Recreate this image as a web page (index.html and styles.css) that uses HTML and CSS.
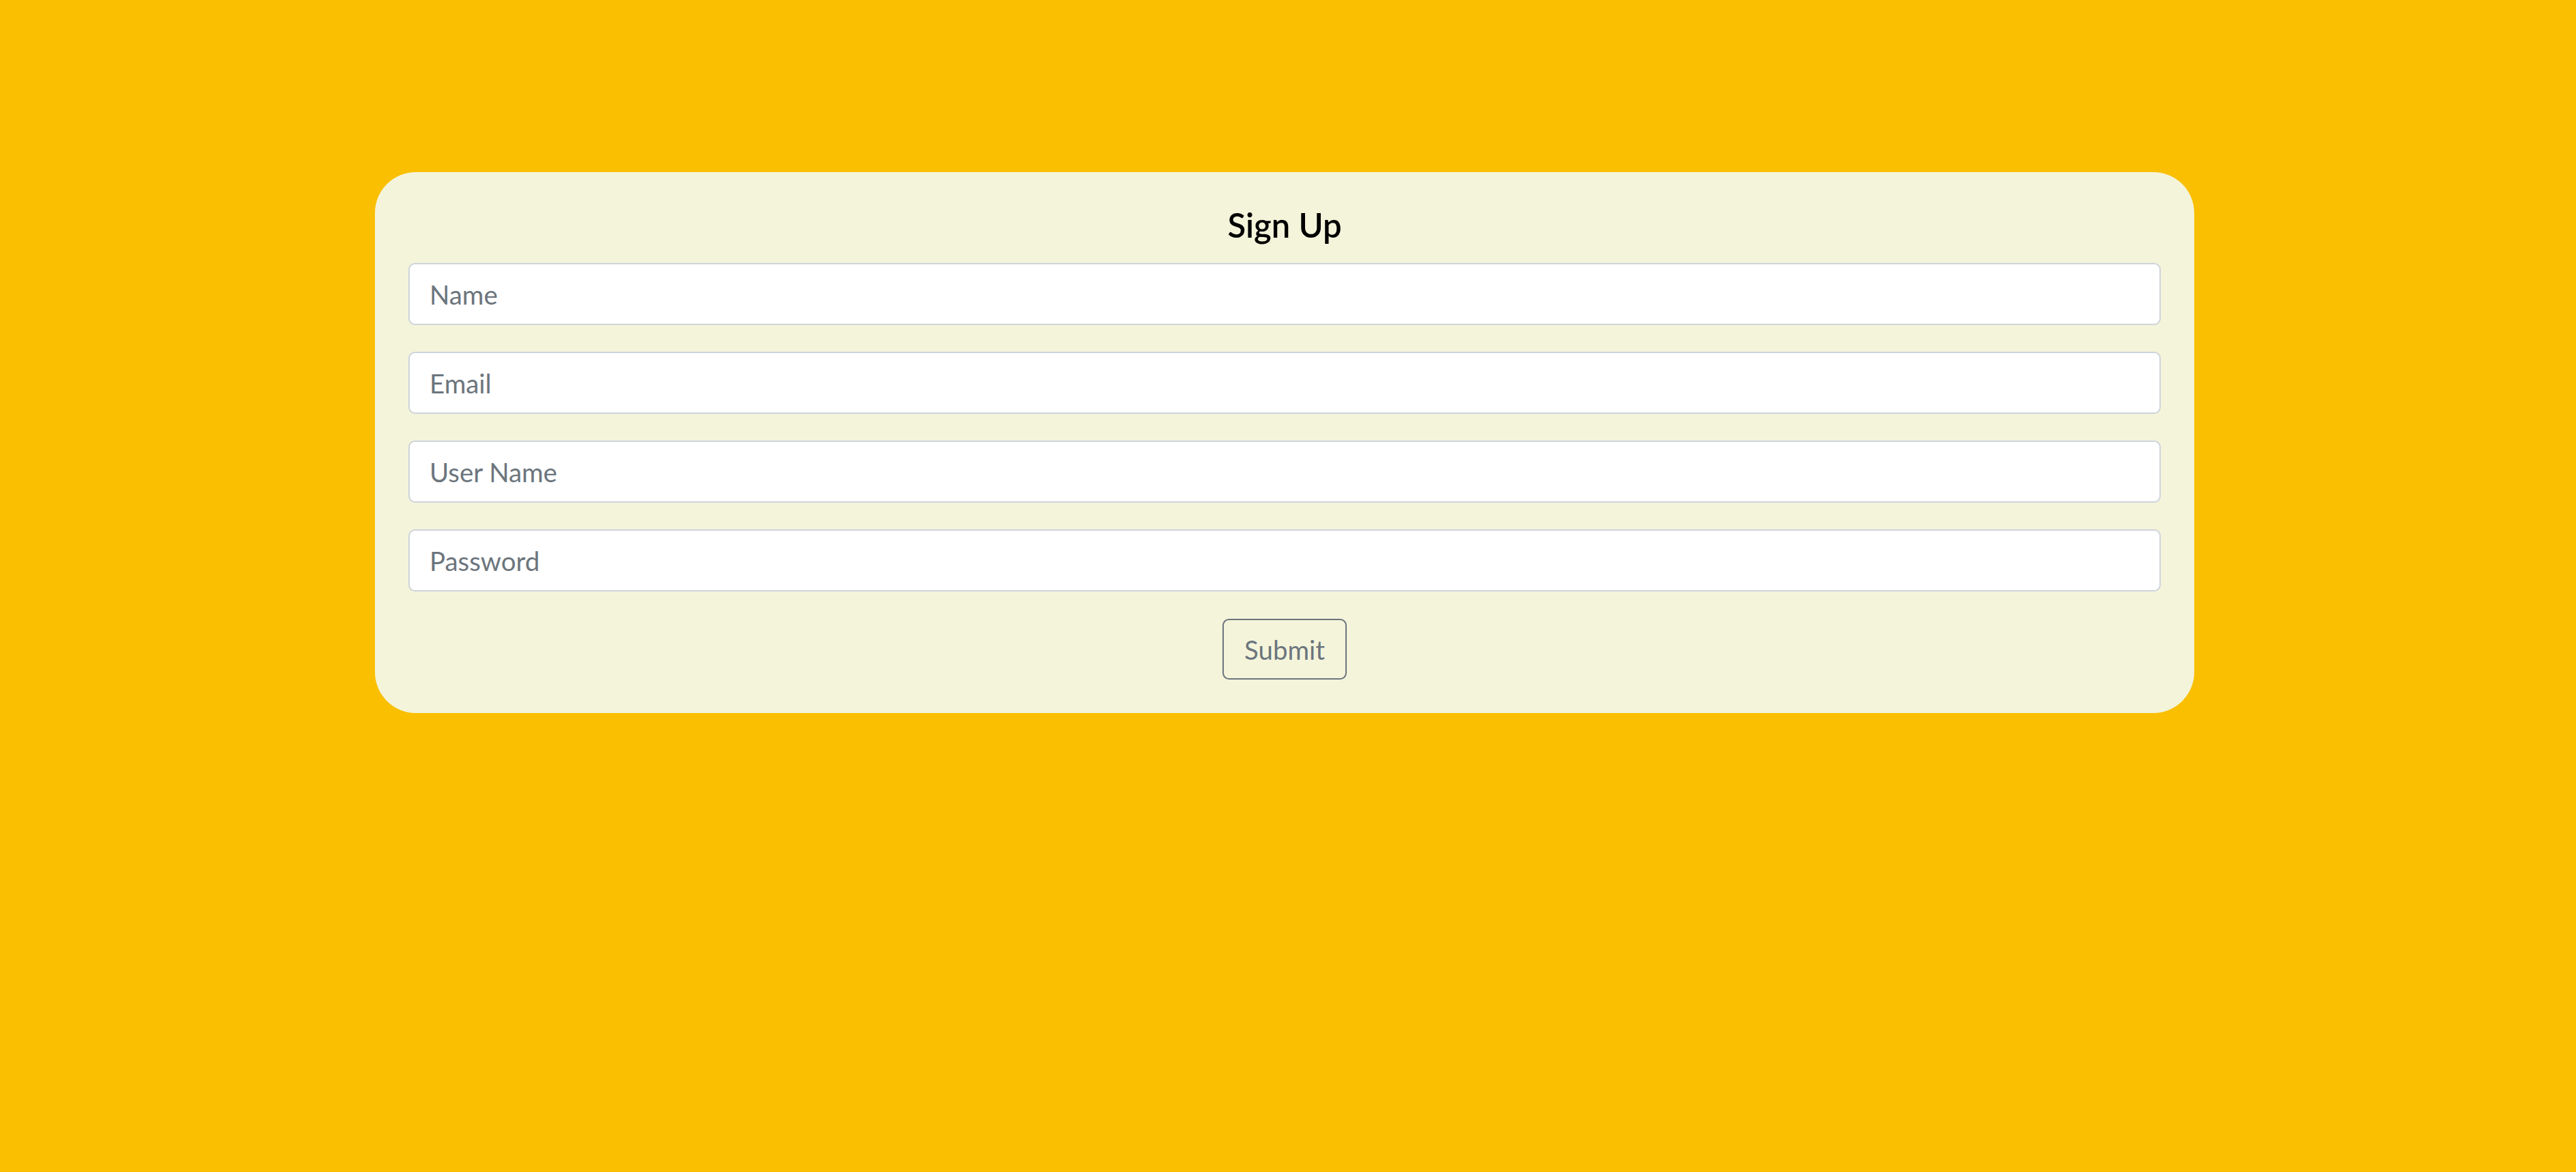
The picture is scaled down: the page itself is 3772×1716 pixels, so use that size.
FILE: index.html
```html
<!DOCTYPE html>
<html lang="en">
<head>
<meta charset="utf-8">
<title>Sign Up</title>
<link rel="stylesheet" href="styles.css">
</head>
<body>
<main class="page">
  <form class="card">
    <h5 class="title">Sign Up</h5>
    <input class="field" type="text" placeholder="Name">
    <input class="field" type="email" placeholder="Email">
    <input class="field" type="text" placeholder="User Name">
    <input class="field" type="password" placeholder="Password">
    <div class="actions"><button class="btn" type="submit">Submit</button></div>
  </form>
</main>
</body>
</html>
```
FILE: styles.css
```css
html, body {
  margin: 0;
  padding: 0;
  background: #f9bf00;
  height: 100%;
}
body {
  font-family: Lato, "Open Sans", sans-serif;
}
.page {
  padding-top: 252px;
}
.card {
  box-sizing: border-box;
  width: 2664px;
  margin-left: 549px;
  background: #f4f4db;
  border-radius: 60px;
  padding: 48px 49px 49px;
  display: flex;
  flex-direction: column;
}
.title {
  margin: 0 0 27px;
  text-align: center;
  font-size: 49px;
  line-height: 58px;
  font-weight: 600;
  color: #000;
}
.field {
  box-sizing: border-box;
  height: 91px;
  width: 100%;
  margin: 0 0 39px;
  padding: 1px 29px 0;
  border: 2.4px solid #ced4da;
  border-radius: 9.6px;
  background: #fff;
  font-family: inherit;
  font-size: 38.4px;
  color: #495057;
  outline: none;
}
.field::placeholder {
  color: #6c757d;
}
.actions {
  display: flex;
  justify-content: center;
  margin-top: 1px;
}
.btn {
  box-sizing: border-box;
  height: 89px;
  width: 182px;
  padding: 1px 0 0;
  border: 2.4px solid #6c757d;
  border-radius: 9.6px;
  background: transparent;
  color: #6c757d;
  font-family: inherit;
  font-size: 38.4px;
}
```
